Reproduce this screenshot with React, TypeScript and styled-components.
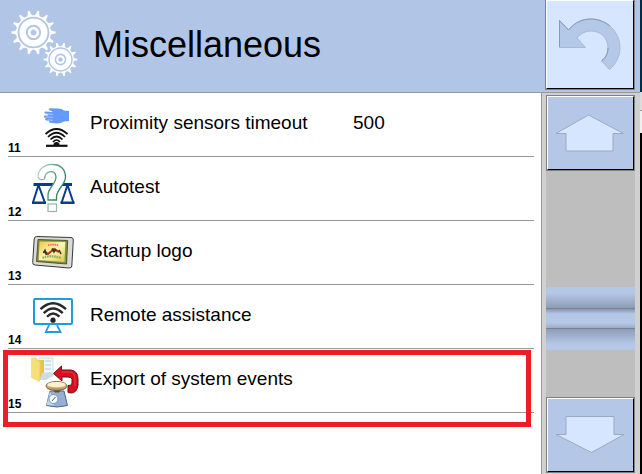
import React from "react";
import styled, { createGlobalStyle } from "styled-components";

const GlobalStyle = createGlobalStyle`
  * { box-sizing: border-box; }
  body { margin: 0; background: #fff; }
  button { font: inherit; color: inherit; }
`;

const Screen = styled.div`
  display: grid;
  grid-template-columns: minmax(0, 1fr) 2px;
  min-height: 100vh;
  font-family: "Liberation Sans", Arial, sans-serif;
  color: #000;
`;

const Panel = styled.div`
  display: flex;
  flex-direction: column;
`;

const Edge = styled.div`
  background: linear-gradient(#032c47 0 92px, #dcdcdc 92px 110px, #999 110px 111px, #f0f0f0 111px 133px, #000 133px);
`;

const Header = styled.header`
  display: flex;
  align-items: flex-start;
  height: 93px;
  padding-right: 5px;
  background: #b1c6e7;
  border-bottom: 1px solid #999;
`;

const Title = styled.h1`
  flex: 1;
  margin: 0;
  padding-left: 11px;
  font-size: 36px;
  line-height: 90px;
  font-weight: 400;
`;

const BevelButton = styled.button<{ $tone: string }>`
  display: block;
  width: 100%;
  height: 76px;
  flex: none;
  padding: 0;
  border: 1px solid;
  border-color: #fff #000 #000 #fff;
  outline: 1px solid #808080;
  outline-offset: 0;
  background: ${(p) => p.$tone};

  svg { display: block; margin: 0 auto; }
`;

const BackButton = styled(BevelButton)`
  width: 88px;
  height: 89px;
  margin-right: 1px;
`;

const Body = styled.div`
  display: grid;
  flex: 1;
  grid-template-columns: minmax(0, 1fr) 99px;
`;

const List = styled.ul`
  margin: 0;
  padding: 0 7px 0 8px;
  list-style: none;
`;

const Item = styled.li<{ $marked?: boolean }>`
  position: relative;
  border-bottom: 1px solid #999;

  &::after {
    content: ${(p) => (p.$marked ? '""' : "none")};
    position: absolute;
    inset: 1px 3px -15px -5px;
    border: 5px solid #ee1c25;
    pointer-events: none;
  }
`;

const Entry = styled.button`
  display: grid;
  grid-template-columns: 20px 62px 263px 1fr;
  width: 100%;
  height: 63px;
  padding: 0;
  border: 0;
  background: none;
  text-align: left;
  font-size: 19px;
  line-height: 60px;
  white-space: nowrap;
`;

const Index = styled.span`
  align-self: end;
  font-size: 12px;
  line-height: 16px;
  font-weight: 700;
`;

const Sidebar = styled.aside`
  display: flex;
  flex-direction: column;
  padding: 3px 5px 2px 4px;
  border-left: 1px solid #999;
  background: #d0d0d0;

  & > button { width: 87px; height: 74px; margin-left: 1px; }
`;

const Track = styled.div`
  display: flex;
  flex: 1;
  flex-direction: column;
  margin: 1px 0;
  background: #bebebe;
`;

const Space = styled.div<{ $share: number }>`
  flex: ${(p) => p.$share};
`;

const Thumb = styled.div`
  height: 63px;
  background: linear-gradient(
    #b4c7e7 0, #b4c7e7 6px, #8e9cb6 21px, #79818e 21px, #79818e 22px,
    #8b96a9 22px, #b4c7e7 27px, #b4c7e7 36px, #9dabc4 41px,
    #79818e 41px, #79818e 42px, #8e9cb6 42px, #b4c7e7 57px
  );
`;

function Gear({ x, y, r }: { x: number; y: number; r: number }) {
  return (
    <g transform={`translate(${x} ${y}) scale(${r / 21})`} fill="none" stroke="#fff">
      {Array.from({ length: 14 }, (_, i) => (
        <path key={i} d="M-3-16 Q-1-18-.9-21.5H.9Q1-18 3-16Z" fill="#fff" stroke="none" transform={`rotate(${((i + 0.5) * 360) / 14})`} />
      ))}
      <circle r="16.2" strokeWidth="1.4" fill="#b1c6e7" />
      <circle r="10.6" strokeWidth="6.2" />
      <circle r="4.2" strokeWidth="2.6" />
    </g>
  );
}

const Gears = () => (
  <svg width="82" height="90" viewBox="0 0 82 90" aria-hidden="true">
    <Gear x={33.5} y={32.5} r={21.5} />
    <Gear x={60.5} y={59.5} r={16.5} />
  </svg>
);

function RowIcon({ children }: { children: React.ReactNode }) {
  return <svg width="52" height="62" viewBox="0 0 52 62" fill="none" aria-hidden="true">{children}</svg>;
}

const ProximityIcon = () => (
  <RowIcon>
    <path d="M17 20.5Q15.5 19 17.5 18.5L24 19 24.5 18.5 21 17Q20 15.5 22 15.2L30 15.4Q34 15.3 36 17.5L41 18V28L36 28.5Q33 30.5 29 30.5L22 29.8Q20 29.2 21.5 28L17.5 27.2Q16 26 18 25.2L16.5 24.6Q15 23 17 22.6L20 22.5 20 21.5Z" fill="#659afa" />
    <path d="M18 20.9 25 21.3M18 24 25 24.4M20 27 25 27.3" stroke="#d7e7ff" strokeWidth=".6" />
    <g stroke="#111" strokeWidth="1.7">
      <path d="M17.5 41Q28.5 31 39.5 41M20 44Q28.5 35.5 37 44M22.5 46.5Q28.5 40.5 34.5 46.5M25 49Q28.5 45 32 49" />
      <path d="M18 52.8H39.5" strokeWidth="2.2" />
    </g>
    <path d="M25.5 52A3 3 0 0 1 31.5 52Z" fill="#111" />
  </RowIcon>
);

const AutotestIcon = () => (
  <RowIcon>
    <defs>
      <linearGradient id="query" x1="0" x2="1" y1=".2" y2=".8">
        <stop stopColor="#b7d5c9" /><stop offset=".5" stopColor="#4b9472" /><stop offset="1" stopColor="#287d55" />
      </linearGradient>
    </defs>
    <path d="M10.5 28 4.8 46M10.5 28 17 46M39.5 28 33.5 46M39.5 28 45.5 46" stroke="#073d8c" strokeWidth="2" />
    <path d="M5.5 26H44V29H5.5Z" fill="#073d8c" />
    <path d="M4 44.5H18V47H4ZM32.5 44.5H46.5V47H32.5Z" fill="#073d8c" />
    <path d="M10 20C10 11 18 7 25 7.5C32 7.5 37.5 12 37.5 20C37.5 28 28.5 32 28.5 40V43H20V38C20 31 28 27 28 20C28 12 17 13 16.5 22Q12 24 10 20Z" fill="#fff" stroke="url(#query)" strokeWidth="1.3" />
    <rect x="20" y="47" width="8.5" height="7.5" fill="#fff" stroke="#8fbca5" strokeWidth="1.2" />
  </RowIcon>
);

const LogoIcon = () => (
  <RowIcon>
    <defs>
      <linearGradient id="canvas" x1="0" y1="0" x2="1" y2="1">
        <stop stopColor="#e9c84b" /><stop offset=".5" stopColor="#fff7b4" /><stop offset="1" stopColor="#e0c24b" />
      </linearGradient>
    </defs>
    <path d="M8.5 15.5 43 16.5Q45.5 16.7 45.3 19L43.8 45Q43.5 47.3 41 47L7 44Q4.5 43.8 4.7 41.5L6.2 18Q6.5 15.5 8.5 15.5Z" fill="#dadad7" stroke="#383838" />
    <path d="M10 18.5 39.7 19.5 38.6 43 8.5 40.5Z" fill="#82943b" stroke="#394022" strokeWidth=".8" />
    <path d="M11.5 20.5 37.3 21.1 36.5 41 10.7 39Z" fill="url(#canvas)" />
    <path d="M20 24.2Q25 22.8 31 24.5" stroke="#ed695d" strokeWidth="1.7" strokeDasharray="1.5 .7" />
    <path d="M16 30 20 33 26 28 31 31" stroke="#b53618" strokeWidth="2.1" />
    <path d="M15.5 32 17 29.5 18.5 34M24 27.5 26 31 28 28M31 29 33 33" stroke="#343421" strokeWidth="1.6" />
    <path d="M14.5 37Q22 33.5 33 37" stroke="#89b35f" strokeWidth="2.4" strokeDasharray="1.7 .7" />
  </RowIcon>
);

const RemoteIcon = () => (
  <RowIcon>
    <rect x="6" y="14" width="38" height="25" rx="1" stroke="#229bdc" strokeWidth="2" />
    <path d="M21 40 17.8 47H32.5L29 40" stroke="#229bdc" strokeWidth="1.8" />
    <path d="M12.5 24.2Q25 12.2 38 24.2M15.7 28.1Q25 18.7 34.7 28.1M19 31.7Q25 25.3 31.5 31.7" stroke="#292929" strokeWidth="2.4" />
    <circle cx="25" cy="35.2" r="2.6" fill="#222" />
  </RowIcon>
);

const ExportIcon = () => (
  <RowIcon>
    <defs>
      <linearGradient id="folder"><stop stopColor="#f7e790" /><stop offset="1" stopColor="#e5bd43" /></linearGradient>
      <linearGradient id="pan" x1="0" y1="0" x2="0" y2="1"><stop stopColor="#fff4d4" /><stop offset="1" stopColor="#ae854e" /></linearGradient>
    </defs>
    <path d="M11 9H25V27L12 28Z" fill="#eef7fb" stroke="#b9d5df" strokeWidth=".7" />
    <path d="M14 12H16M14 16H16M14 20H16" stroke="#51a1bd" strokeWidth="1.3" />
    <path d="M17 12H23M17 16H23M17 20H23" stroke="#b1ced6" />
    <path d="M3 8.5H8L10 11H16V26.5L11 32.5 3 28.5Z" fill="url(#folder)" />
    <path d="M3 9 11.5 13V33L3 28.5Z" fill="#f5df78" />
    <path d="M14 24 23 23 26 26 18 31 12 31Z" fill="#cddce1" />
    <path d="M25.5 24.5 33.5 17V21H43Q50 22 50 30V36Q49 44 43 44L40 43.5V36.5Q44 37 44 34V30Q43 28 40 28H34V32Z" fill="#d80f20" stroke="#731019" />
    <path d="M34 23H42Q47 23.3 47 30V37" stroke="#f04850" strokeWidth=".8" />
    <path d="M22 42H36L39.5 56.5Q29 59.5 18.5 56.5Z" fill="#94b1d5" stroke="#506988" />
    <path d="M22 42 26 56.5 18.5 56Z" fill="#c0d6ec" />
    <circle cx="25.5" cy="50" r="4.5" fill="#f5fbff" stroke="#7996b8" />
    <path d="M24 52 27.5 48" stroke="#536478" />
    <path d="M25 41H33L31 43.5H27Z" fill="#60513d" />
    <ellipse cx="28.5" cy="37" rx="10.5" ry="4.5" fill="url(#pan)" stroke="#7d6543" />
    <ellipse cx="28.5" cy="35.7" rx="9" ry="2.6" fill="#fff0cd" />
  </RowIcon>
);

const BackArrow = () => (
  <svg width="86" height="87" viewBox="2 1 86 87" fill="none" aria-hidden="true">
    <path d="M14.5 20.5V47.5H40.5L32 38C36 33 41 31 46 31C56 31 63 38 63 48C63 54 60 58 56.5 61L64.5 69.5C70 65 75 57 75 48C75 32 62 19 46 19C38 19 30 22 23.5 30Z" fill="#b4c8e7" stroke="#a9b9d5" />
    <path d="M14.5 47V20.5L23.5 30C30 22 38 19 46 19C53 19 60 22 65 26M56.5 61C60 58 63 54 63 48" stroke="#8998b3" />
  </svg>
);

function ScrollArrow({ points }: { points: string }) {
  return (
    <svg width="85" height="72" viewBox="0 0 85 72" aria-hidden="true">
      <polygon points={points} fill="#d7e6ff" stroke="#9ba9c3" />
    </svg>
  );
}

const entries = [
  { index: 11, label: "Proximity sensors timeout", value: "500", Icon: ProximityIcon },
  { index: 12, label: "Autotest", Icon: AutotestIcon },
  { index: 13, label: "Startup logo", Icon: LogoIcon },
  { index: 14, label: "Remote assistance", Icon: RemoteIcon },
  { index: 15, label: "Export of system events", Icon: ExportIcon, marked: true },
];

export default function App() {
  return (
    <Screen>
      <GlobalStyle />
      <Panel>
        <Header>
          <Gears />
          <Title>Miscellaneous</Title>
          <BackButton $tone="#d7e6ff" type="button" aria-label="Back"><BackArrow /></BackButton>
        </Header>
        <Body>
          <List>
            {entries.map(({ index, label, value, Icon, marked }) => (
              <Item key={index} $marked={marked}>
                <Entry type="button">
                  <Index>{index}</Index>
                  <Icon />
                  <span>{label}</span>
                  <span>{value}</span>
                </Entry>
              </Item>
            ))}
          </List>
          <Sidebar>
            <BevelButton $tone="#b4c7e7" type="button" aria-label="Scroll up">
              <ScrollArrow points="40.5,18 8,36.5 18,36.5 18,54 65,54 65,36.5 75.5,36.5" />
            </BevelButton>
            <Track>
              <Space $share={116} />
              <Thumb />
              <Space $share={47} />
            </Track>
            <BevelButton $tone="#b4c7e7" type="button" aria-label="Scroll down">
              <ScrollArrow points="18,17.5 66,17.5 66,35.5 76,35.5 43.5,53.5 8,35.5 18,35.5" />
            </BevelButton>
          </Sidebar>
        </Body>
      </Panel>
      <Edge />
    </Screen>
  );
}
